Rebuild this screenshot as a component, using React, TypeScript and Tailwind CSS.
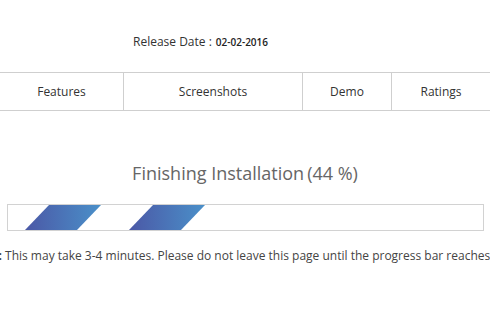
const tabs = [
  { label: "Features", w: "w-[123px]" },
  { label: "Screenshots", w: "w-[179px]" },
  { label: "Demo", w: "w-[89px]" },
  { label: "Ratings", w: "flex-1" },
];

const ProgressStripes = () => (
  <svg width="476" height="25" viewBox="0 0 476 25" className="block">
    <defs>
      <linearGradient id="s1" x1="0" x2="1" y1="0" y2="0">
        <stop offset="0" stopColor="#4b58a6" />
        <stop offset="1" stopColor="#4a90c9" />
      </linearGradient>
    </defs>
    <polygon points="17,25 41,0 93,0 69,25" fill="url(#s1)" />
    <polygon points="121,25 145,0 197,0 173,25" fill="url(#s1)" />
  </svg>
);

export default function App() {
  return (
    <div className="w-full h-[312px] bg-white overflow-hidden font-['Open_Sans',sans-serif]">
      <div className="pt-[33px] pl-[133px] flex items-baseline leading-[18px]">
        <span className="text-[12px] text-[#333]">Release Date :</span>
        <span className="ml-1 text-[10px] font-semibold text-[#222]">02-02-2016</span>
      </div>
      <div className="mt-[21px] flex h-[39px] border-y border-[#cfcfcf] text-[12px] text-[#333]">
        {tabs.map((t, i) => (
          <div
            key={t.label}
            className={`${t.w} flex items-center justify-center ${i > 0 ? "border-l border-[#cfcfcf]" : ""}`}
          >
            {t.label}
          </div>
        ))}
      </div>
      <div className="mt-[49px] text-center text-[18px] text-[#666] leading-[27px]">
        Finishing Installation<span className="ml-[3px]">(44 %)</span>
      </div>
      <div className="mt-[17px] mx-[7px] w-[477px] h-[27px] border border-[#d2d2d2]">
        <ProgressStripes />
      </div>
      <div className="mt-[16px] whitespace-nowrap text-[12px] leading-[18px] text-[#444] ml-[-31px]">
        <span className="font-bold">Note:</span> This may take 3-4 minutes. Please do not leave this page until the progress bar reaches 100%.
      </div>
    </div>
  );
}
